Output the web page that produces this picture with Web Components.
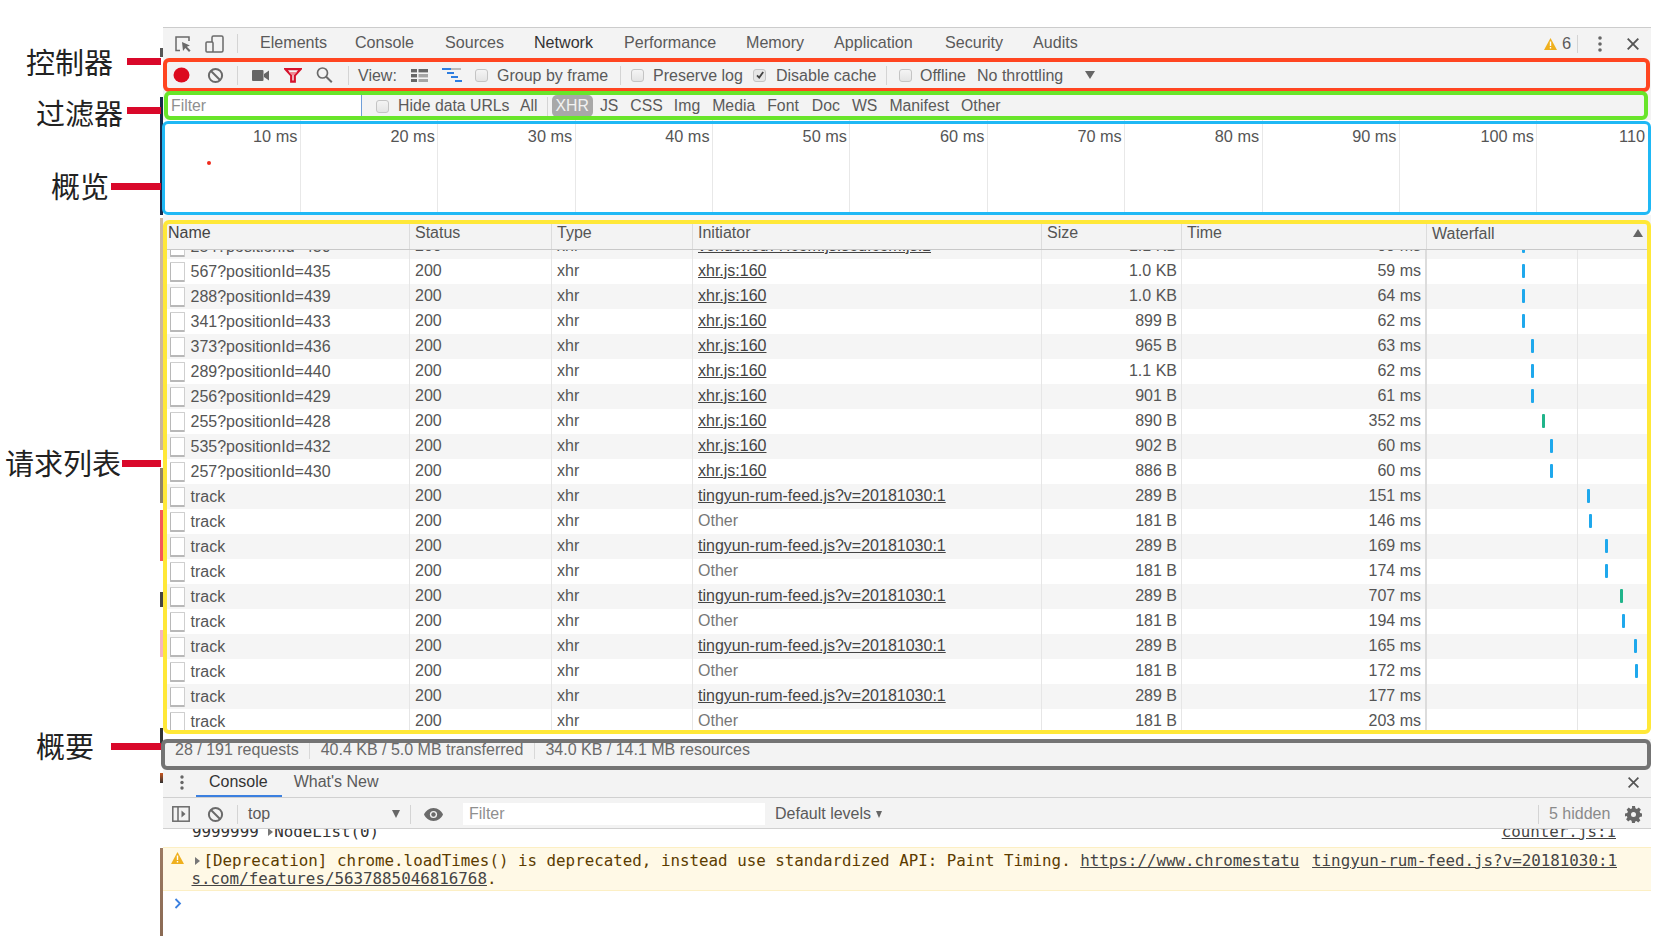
<!DOCTYPE html>
<html lang="en">
<head>
<meta charset="utf-8">
<title>Network panel</title>
<style>
  html, body { margin: 0; height: 100%; background: #fff; }
  body {
    font-family: "Liberation Sans", Arial, sans-serif;
    color: #5a5a5a;
    overflow: hidden;
  }
</style>
</head>
<body>
<dt-page>
  <main-tabs></main-tabs>
  <call-out label="控制器" color="#ff4520" bar="#d9082a" thick="4" style="--top:-1px;--bottom:-1px;--left:2px;--right:1px;--lx:-135px;--ly:-15px;--bw:34px;--by:-1px">
    <net-toolbar></net-toolbar>
  </call-out>
  <call-out label="过滤器" color="#68e52a" bar="#d9082a" thick="4" style="--top:0px;--bottom:0px;--left:3px;--right:3px;--lx:-125px;--ly:4px;--bw:34px;--by:16px">
    <filter-bar></filter-bar>
  </call-out>
  <call-out label="概览" color="#1fb8f5" bar="#d9082a" thick="3" style="--top:1px;--bottom:0px;--left:1px;--right:0px;--lx:-110px;--ly:48px;--bw:50px;--by:63px">
    <over-view></over-view>
  </call-out>
  <div style="height:7px;background:#f5f5f5"></div>
  <call-out label="请求列表" color="#ffe838" bar="#d9082a" thick="4" style="--top:-2px;--bottom:0px;--left:2px;--right:0px;--lx:-156px;--ly:223px;--bw:39px;--by:238px">
    <request-table></request-table>
  </call-out>
  <div style="height:5px"></div>
  <call-out label="概要" color="#747474" bar="#d9082a" thick="4" style="--top:0px;--bottom:0px;--left:0px;--right:0px;--lx:-125px;--ly:-11px;--bw:50px;--by:4px">
    <status-bar></status-bar>
  </call-out>
  <console-drawer></console-drawer>
</dt-page>

<script>
// small helper, every component sets its shadow root the same way
class Base extends HTMLElement {
  connectedCallback() {
    if (this.shadowRoot) return;
    this.attachShadow({ mode: 'open' }).innerHTML = this.render();
  }
}

const ICONS = {
  block: `<svg width="17" height="17" viewBox="0 0 17 17" fill="none" stroke="#6a6a6a" stroke-width="2"><circle cx="8.5" cy="8.5" r="6.6"/><path d="M4 4l9 9"/></svg>`,
  warn: `<svg width="13" height="12" viewBox="0 0 13 12"><path d="M6.5 0L13 12H0z" fill="#efb01e"/><path d="M5.8 3.5h1.4v4.5H5.8zM5.8 9h1.4v1.5H5.8z" fill="#fff"/></svg>`,
  check: (on) => `<span class="cb ${on ? 'on' : ''}">${on ? '<svg width="12" height="12" viewBox="0 0 12 12" fill="none" stroke="#444" stroke-width="1.8"><path d="M3 6.4l2.2 2.2L9.2 3"/></svg>' : ''}</span>`
};

const CB_CSS = `
  .cb { width: 11px; height: 11px; flex: none; border: 1px solid #c4c4c4; border-radius: 3px; background: linear-gradient(#f4f4f4,#e4e4e4); display: inline-flex; align-items: center; justify-content: center; }
  .cb svg { flex: none; margin: -1px; }
  .cb.on { background: #e6e6e6; }
  .sep { width: 1px; height: 19px; background: #d4d4d4; flex: none; }
`;

class DtPage extends Base {
  render() {
    return `<style>
      :host { display: block; position: relative; height: 936px; box-sizing: border-box; margin-left: 161px; width: 1490px; padding-top: 27px; font-size: 16px; }
      /* the site behind the docked panel shows through as a thin strip */
      .edge { position: absolute; left: -1px; top: 0; width: 3px; height: 100%; z-index: 1;
        background: linear-gradient(#fff 48px,#555 48px,#555 57px,#fff 57px,#fff 97px,#16294a 97px,#16294a 215px,#fff 215px,#fff 218px,#cdb9a2 218px,#c8b49e 450px,#fff 450px,#fff 468px,#8e826a 468px,#8e826a 503px,#fff 503px,#fff 510px,#f5585a 510px,#f5585a 561px,#fff 561px,#fff 592px,#444 592px,#444 607px,#fff 607px,#fff 630px,#f4b6c2 630px,#f4b6c2 657px,#fff 657px,#fff 728px,#333 728px,#333 747px,#fff 747px,#fff 773px,#c8561e 773px,#333 783px,#fff 783px,#fff 848px,#9c7a62 848px,#8a6a54 936px); }
    </style><div class="edge"></div><slot></slot>`;
  }
}

class MainTabs extends Base {
  render() {
    const tabs = [['Elements', 99, 0], ['Console', 194, 0], ['Sources', 284, 0], ['Network', 373, 1], ['Performance', 463, 0], ['Memory', 585, 0], ['Application', 673, 0], ['Security', 784, 0], ['Audits', 872, 0]];
    return `<style>
      :host { display: block; height: 32px; background: #f3f3f3; border-top: 1px solid #ccc; box-sizing: border-box; }
      .bar { display: flex; align-items: center; height: 31px; padding-left: 13px; }
      span.t { white-space: nowrap; color: #5a5a5a; }
      span.t.on { color: #333; }
      .sep { width: 1px; height: 19px; background: #d4d4d4; flex: none; }
      .end { margin-left: auto; display: flex; align-items: center; }
      .tabs { display: flex; margin-left: 22px; font-size: 16.1px; margin-top: -2px; }
    </style><div class="bar">
      <svg width="19" height="18" viewBox="0 0 19 18" fill="none" stroke="#6a6a6a" stroke-width="1.5" style="flex:none"><path d="M6 15.5H2V2h13v4"/><path d="M8 7l1 9 2.3-3 3.7 4 1.6-1.600-3.700-3.600 3-1.400z" fill="#6a6a6a" stroke="none"/></svg>
      <svg width="19" height="18" viewBox="0 0 19 18" fill="none" stroke="#6a6a6a" stroke-width="1.5" style="flex:none;margin-left:12px"><rect x="7" y="1" width="11" height="16" rx="1.5"/><rect x="1" y="7" width="7" height="10" rx="1" fill="#f3f3f3"/></svg>
      <span class="sep" style="margin-left:13px"></span>
      <span class="tabs">
      ${tabs.map(([t, x, on], i) => `<span class="t ${on ? 'on' : ''}" style="width:${i < tabs.length - 1 ? tabs[i + 1][1] - x : 60}px">${t}</span>`).join('')}
      </span>
      <span class="end">
        ${ICONS.warn}
        <span style="margin-left:5px;font-size:16.5px;width:9px">6</span>
        <span class="sep" style="margin-left:6px;height:18px"></span>
        <svg width="4" height="16" viewBox="0 0 4 16" fill="#666" style="margin-left:20px"><circle cx="2" cy="2" r="1.8"/><circle cx="2" cy="8" r="1.8"/><circle cx="2" cy="14" r="1.8"/></svg>
        <svg width="12" height="12" viewBox="0 0 12 12" stroke="#555" stroke-width="1.9" style="margin-left:25px;margin-right:12px"><path d="M.7.7l10.6 10.6M11.3.7L.7 11.3"/></svg>
      </span>
    </div>`;
  }
}

class CallOut extends Base {
  render() {
    const label = this.getAttribute('label'), color = this.getAttribute('color');
    const bar = this.getAttribute('bar'), thick = this.getAttribute('thick');
    return `<style>
      :host { display: block; position: relative; }
      .box { position: absolute; z-index: 5; pointer-events: none; box-sizing: border-box;
        top: var(--top); bottom: var(--bottom); left: var(--left); right: var(--right);
        border: ${thick}px solid ${color}; border-radius: 6px; }
      .lbl { position: absolute; left: var(--lx); top: var(--ly); white-space: nowrap; z-index: 6;
        font: 29px/1.2 "Noto Sans CJK SC", sans-serif; color: #222; }
      .bar { position: absolute; z-index: 6; left: calc(0px - var(--bw)); width: var(--bw); top: var(--by); height: 7px; background: ${bar}; }
    </style><slot></slot><div class="box"></div><div class="lbl">${label}</div><div class="bar"></div>`;
  }
}

class NetToolbar extends Base {
  render() {
    return `<style>${CB_CSS}
      :host { display: block; height: 32px; background: #f3f3f3; font-size: 16px; }
      .r { display: flex; align-items: center; height: 32px; white-space: nowrap; }
      .r > * { flex: none; }
      .tx { margin-top: 2px; }
    </style><div class="r">
      <svg style="margin-left:12px" width="17" height="16" viewBox="0 0 17 16"><ellipse cx="8.5" cy="8" rx="8" ry="7.6" fill="#dc0b1e"/></svg>
      <span style="margin-left:17px;display:flex">${ICONS.block}</span>
      <span class="sep" style="margin-left:13px"></span>
      <svg style="margin-left:14px" width="17" height="11" viewBox="0 0 17 11" fill="#666"><rect width="11.5" height="11" rx="1"/><path d="M12 4l5-3.500v10L12 7z"/></svg>
      <svg style="margin-left:15px" width="18" height="15" viewBox="0 0 18 15" fill="none" stroke="#d6122c" stroke-width="2.2"><path d="M1.500 1.200h15L10.800 7.400v6.200H7.200V7.400z"/><path d="M5 4h8l-2.800 3H7.800z" fill="#f08a94" stroke="none"/></svg>
      <svg style="margin-left:14px" width="17" height="16" viewBox="0 0 17 16" fill="none" stroke="#6a6a6a" stroke-width="1.7"><circle cx="6.500" cy="6" r="5"/><path d="M10.200 9.800l5.600 5.400" stroke-width="2"/></svg>
      <span class="sep" style="margin-left:15px"></span>
      <span class="tx" style="margin-left:9px;width:53px">View:</span>
      <svg width="17" height="13" viewBox="0 0 17 13" fill="#666"><rect width="6" height="3.400"/><rect x="7.500" width="9.500" height="3.400"/><rect y="5" width="6" height="3.400"/><rect x="7.500" y="5" width="9.500" height="3.400" opacity=".55"/><rect y="10" width="6" height="3"/><rect x="7.500" y="10" width="9.500" height="3" opacity=".55"/></svg>
      <svg style="margin-left:14px" width="20" height="14" viewBox="0 0 20 14"><path d="M0 1h9" stroke="#2d7de0" stroke-width="2"/><path d="M9 1h10" stroke="#bbb" stroke-width="2"/><path d="M5 5h7M9 9h7M13 13h7" stroke="#2d7de0" stroke-width="2"/></svg>
      <span style="margin-left:13px;display:flex">${ICONS.check(0)}</span>
      <span class="tx" style="margin-left:9px;width:113px">Group by frame</span>
      <span class="sep" style="margin-left:10px"></span>
      <span style="margin-left:10px;display:flex">${ICONS.check(0)}</span>
      <span class="tx" style="margin-left:9px;width:92px">Preserve log</span>
      <span style="margin-left:8px;display:flex">${ICONS.check(1)}</span>
      <span class="tx" style="margin-left:10px;width:101px">Disable cache</span>
      <span class="sep" style="margin-left:9px"></span>
      <span style="margin-left:12px;display:flex">${ICONS.check(0)}</span>
      <span class="tx" style="margin-left:8px;width:50px">Offline</span>
      <span class="tx" style="margin-left:7px;width:100px">No throttling</span>
      <span style="margin-left:8px;width:0;height:0;border:5px solid transparent;border-top:8px solid #666;border-bottom:0"></span>
    </div>`;
  }
}

class FilterBar extends Base {
  render() {
    return `<style>${CB_CSS}
      :host { display: block; height: 29px; background: #f3f3f3; font-size: 15.8px; }
      .r { display: flex; align-items: center; height: 28px; padding-top: 1px; white-space: nowrap; padding-left: 7px; }
      .r > * { flex: none; }
      .in { width: 194px; height: 22px; box-sizing: border-box; background: #fff; border-right: 1px solid #6f9fd8; border-bottom: 1px solid #6f9fd8; color: #8f8f8f; padding-left: 3px; line-height: 21px; }
      .types { display: flex; align-items: center; }
      .x { background: #a8a8a8; color: #f2f2f2; border-radius: 5px; padding: 0 4px; height: 22px; line-height: 22px; }
    </style><div class="r">
      <div class="in">Filter</div>
      <span style="margin-left:14px;display:flex">${ICONS.check(0)}</span>
      <span style="margin-left:9px;width:122px">Hide data URLs</span>
      <span>All</span>
      <span class="sep" style="margin-left:9px;margin-right:4px"></span>
      <span class="types">
        <span class="x" style="margin-right:7px">XHR</span>
        <span style="margin-right:12px">JS</span>
        <span style="margin-right:11px">CSS</span>
        <span style="margin-right:12px">Img</span>
        <span style="margin-right:12px">Media</span>
        <span style="margin-right:13px">Font</span>
        <span style="margin-right:12px">Doc</span>
        <span style="margin-right:12px">WS</span>
        <span style="margin-right:12px">Manifest</span>
        <span>Other</span>
      </span>
    </div>`;
  }
}

class OverView extends Base {
  render() {
    const cells = Array.from({ length: 11 }, (_, i) => `<div class="c"><span>${(i + 1) * 10} ms</span></div>`).join('');
    return `<style>
      :host { display: block; height: 95px; background: #fff; position: relative; overflow: hidden; font-size: 16.3px; }
      .g { display: flex; height: 100%; margin-left: 2.5px; }
      .c { flex: none; width: 137.4px; box-sizing: border-box; border-right: 1px solid #e8e8e8; text-align: right; padding: 7px 2.5px 0 0; white-space: nowrap; line-height: 18px; color: #555; }
      .c span { display: block; }
      .dot { position: absolute; left: 46px; top: 41px; width: 4px; height: 4px; border-radius: 50%; background: #f02a1c; }
    </style><div class="g">${cells}</div><div class="dot"></div>`;
  }
}

class RequestRow extends Base {
  render() {
    const a = (k) => this.getAttribute(k) || '';
    const initiator = a('init');
    const link = initiator !== 'Other';
    const color = a('barcolor') || '#1fa8ec';
    return `<style>
      :host { display: grid; grid-template-columns: var(--cols); height: 25px; line-height: 24px; white-space: nowrap; font-size: 16px; color: #555; }
      :host([odd]) { background: #f5f5f5; }
      .c { box-sizing: border-box; border-right: 1px solid #e6e6e6; overflow: hidden; padding-left: 5px; }
      .n { display: flex; align-items: center; padding-left: 9px; }
      .ck { width: 13px; height: 17px; box-sizing: content-box; border: 1px solid #cfcfcf; border-left-color: #b8b8b8; border-bottom: 2px solid #b8b8b8; border-radius: 1px; background: #fff; flex: none; margin-right: 5.5px; }
      a { color: #444; text-decoration: underline; }
      .o { color: #777; }
      .rt { text-align: right; padding: 0 4px 0 0; }
      .w { position: relative; border-right: 0; padding: 0; overflow: visible; }
      .w::before { content: ""; position: absolute; left: 150px; top: 0; bottom: 0; width: 1px; background: #e6e6e6; }
      .b { position: absolute; top: 5px; height: 14px; width: 3px; border-radius: 1px; background: ${color}; }
    </style>
    <div class="c n"><span class="ck"></span>${a('name')}</div>
    <div class="c">200</div>
    <div class="c">xhr</div>
    <div class="c">${link ? `<a>${initiator}</a>` : `<span class="o">Other</span>`}</div>
    <div class="c rt">${a('size')}</div>
    <div class="c rt" style="border-right:2px solid #dcdcdc">${a('time')}</div>
    <div class="c w"><span class="b" style="left:${a('bar') - 1}px"></span></div>`;
  }
}

class RequestTable extends Base {
  render() {
    const feed = 'tingyun-rum-feed.js?v=20181030:1';
    const data = [
      ['567?positionId=435', 'xhr.js:160', '1.0 KB', '59 ms', 96],
      ['288?positionId=439', 'xhr.js:160', '1.0 KB', '64 ms', 96],
      ['341?positionId=433', 'xhr.js:160', '899 B', '62 ms', 96],
      ['373?positionId=436', 'xhr.js:160', '965 B', '63 ms', 104.5],
      ['289?positionId=440', 'xhr.js:160', '1.1 KB', '62 ms', 104.5],
      ['256?positionId=429', 'xhr.js:160', '901 B', '61 ms', 104.5],
      ['255?positionId=428', 'xhr.js:160', '890 B', '352 ms', 115.5, '#20b48a'],
      ['535?positionId=432', 'xhr.js:160', '902 B', '60 ms', 123.5],
      ['257?positionId=430', 'xhr.js:160', '886 B', '60 ms', 123.5],
      ['track', feed, '289 B', '151 ms', 161],
      ['track', 'Other', '181 B', '146 ms', 162.5],
      ['track', feed, '289 B', '169 ms', 179],
      ['track', 'Other', '181 B', '174 ms', 179],
      ['track', feed, '289 B', '707 ms', 194, '#20b48a'],
      ['track', 'Other', '181 B', '194 ms', 195.5],
      ['track', feed, '289 B', '165 ms', 207.5],
      ['track', 'Other', '181 B', '172 ms', 209],
      ['track', feed, '289 B', '177 ms', 222, '#c4e4c8'],
      ['track', 'Other', '181 B', '203 ms', 222, '#c4e4c8'],
    ];
    const heads = ['Name', 'Status', 'Type', 'Initiator', 'Size', 'Time', 'Waterfall'];
    return `<style>
      :host { display: block; --cols: 249px 142px 141px 349px 140px 245px 224px; }
      .h { display: grid; grid-template-columns: var(--cols); height: 28px; line-height: 22px; background: #f3f3f3; border-bottom: 1px solid #c8c8c8; box-sizing: border-box; font-size: 16px; color: #555; }
      .h div { border-right: 1px solid #dcdcdc; padding-left: 5px; position: relative; box-sizing: border-box; }
      .h div:first-child { padding-left: 7px; color: #444; }
      .h div:last-child { border: 0; line-height: 24px; }
      .h i { position: absolute; right: 8px; top: 7px; width: 0; height: 0; border: 5px solid transparent; border-top: 0; border-bottom: 8px solid #666; }
      .body { height: 484px; overflow: hidden; position: relative; }
      .shift { margin-top: -16px; }
    </style>
    <div class="h">${heads.map((t, i) => `<div>${t}${i === 6 ? '<i></i>' : ''}</div>`).join('')}</div>
    <div class="body"><div class="shift">
      <request-row odd name="254?positionId=430" init="vendor.ed77.com.js:sed.com.js:1" size="1.1 KB" time="99 ms" bar="96"></request-row>
      ${data.map((d, i) => `<request-row ${i % 2 ? 'odd' : ''} name="${d[0]}" init="${d[1]}" size="${d[2]}" time="${d[3]}" bar="${d[4]}" barcolor="${d[5] || ''}"></request-row>`).join('')}
    </div></div>`;
  }
}

class StatusBar extends Base {
  render() {
    return `<style>
      :host { display: block; height: 31px; background: #f3f3f3; font-size: 16px; color: #6a6a6a; }
      .r { display: flex; align-items: center; height: 21px; white-space: nowrap; padding-left: 14px; }
      .s { width: 1px; height: 19px; background: #d8d8d8; margin: 0 10.5px; }
    </style><div class="r">
      <span>28 / 191 requests</span><span class="s"></span>
      <span>40.4 KB / 5.0 MB transferred</span><span class="s"></span>
      <span>34.0 KB / 14.1 MB resources</span>
    </div>`;
  }
}

class ConsoleDrawer extends Base {
  render() {
    return `<style>
      :host { display: block; font-size: 16px; }
      .tabs { height: 28px; box-sizing: border-box; background: #f3f3f3; border-bottom: 1px solid #d0d0d0; display: flex; align-items: center; white-space: nowrap; }
      .tab { height: 27px; line-height: 24px; box-sizing: border-box; }
      .tab.on { color: #333; border-bottom: 2px solid #3b80e0; padding: 0 14px 0 13px; margin-left: 30px; }
      .toolbar { height: 31px; box-sizing: border-box; padding-top: 2px; background: #f3f3f3; border-bottom: 1px solid #d0d0d0; display: flex; align-items: center; white-space: nowrap; }
      .toolbar > * { flex: none; }
      .sep { width: 1px; height: 19px; background: #d4d4d4; }
      .in { width: 302px; height: 22px; line-height: 22px; background: #fff; color: #8f8f8f; padding-left: 6px; box-sizing: border-box; }
      .log { height: 107px; overflow: hidden; font: 15.83px/18px "DejaVu Sans Mono", monospace; }
      .l0 { height: 18px; overflow: hidden; display: flex; justify-content: space-between; padding: 0 35px 0 31px; color: #333; }
      .l0 > span { display: block; margin-top: -6px; }
      .l0 a { text-decoration: underline; color: #444; }
      .l0 i { display: inline-block; width: 0; height: 0; border: 4px solid transparent; border-left: 5px solid #777; border-right: 0; margin: 0 1px 1px 0; }
      .warn { position: relative; box-sizing: border-box; height: 44px; background: #fff9e6; border-top: 1px solid #fcefc4; border-bottom: 1px solid #fcefc4; color: #5c3c00; padding: 4px 34px 0 30.5px; }
      .warn p { margin: 0; }
      .warn a { color: #444; text-decoration: underline; }
      .warn .src { position: absolute; right: 34px; top: 4px; }
      .warn .a { position: absolute; left: 10px; top: 4px; display: flex; }
      .warn .tri { display: inline-block; width: 0; height: 0; border: 4px solid transparent; border-left: 5px solid #777; border-right: 0; margin: 0 4px 1px 3px; }
      .pr { padding: 4px 0 0 13px; }
    </style>
    <div class="tabs">
      <svg width="4" height="15" viewBox="0 0 4 15" fill="#666" style="margin:-3px 0 0 19px"><circle cx="2" cy="2" r="1.7"/><circle cx="2" cy="7.5" r="1.7"/><circle cx="2" cy="13" r="1.7"/></svg>
      <span class="tab on" style="margin-left:12px">Console</span>
      <span class="tab" style="margin-left:12px;color:#5a5a5a">What's New</span>
      <svg width="11" height="11" viewBox="0 0 11 11" stroke="#555" stroke-width="1.7" style="margin:-3px 12px 0 auto"><path d="M.6.6l9.800 9.800M10.400.6L.6 10.400"/></svg>
    </div>
    <div class="toolbar">
      <svg style="margin-left:11px" width="18" height="16" viewBox="0 0 18 16" fill="none" stroke="#6a6a6a" stroke-width="1.5"><rect x=".8" y=".8" width="16.400" height="14.400"/><path d="M6 1v14"/><path d="M9.500 4.500l4 3.500-4 3.500z" fill="#6a6a6a" stroke="none"/></svg>
      <span style="margin-left:17px;display:flex">${ICONS.block}</span>
      <span class="sep" style="margin-left:13px"></span>
      <span style="margin-left:10px;width:144px">top</span>
      <span style="width:0;height:0;border:4.500px solid transparent;border-top:8px solid #666;border-bottom:0;margin-right:10px"></span>
      <span class="sep"></span>
      <svg style="margin-left:13px" width="19" height="13" viewBox="0 0 19 13"><path d="M9.500 0C5 0 1.500 3 0 6.500 1.500 10 5 13 9.500 13S17.500 10 19 6.500C17.500 3 14 0 9.500 0z" fill="#6a6a6a"/><circle cx="9.500" cy="6.500" r="3.600" fill="#f3f3f3"/><circle cx="9.500" cy="6.500" r="2.200" fill="#6a6a6a"/></svg>
      <span class="in" style="margin-left:20px">Filter</span>
      <span style="margin-left:10px;width:101px">Default levels</span>
      <span style="width:0;height:0;border:3.500px solid transparent;border-top:7px solid #666;border-bottom:0"></span>
      <span class="sep" style="margin-left:auto"></span>
      <span style="margin-left:10px;width:76px;color:#8a8a8a">5 hidden</span>
      <svg style="margin-right:9px" width="17" height="17" viewBox="0 0 17 17"><path fill="#666" fill-rule="evenodd" d="M7 0h3l.4 2.300 1.500.6 1.900-1.300 2.100 2.100-1.300 1.900.6 1.500L17 7.500v3l-2.300.4-.6 1.500 1.300 1.900-2.100 2.100-1.900-1.300-1.500.6L10 17H7l-.4-2.300-1.500-.6-1.900 1.300-2.100-2.100 1.300-1.900-.6-1.500L0 10.500v-3l2.300-.4.6-1.500L1.600 3.700l2.100-2.100 1.900 1.300 1.500-.6zM8.500 6a2.500 2.500 0 1 0 0 5 2.500 2.500 0 0 0 0-5z"/></svg>
    </div>
    <div class="log">
      <div class="l0"><span>9999999 <i></i>NodeList(0)</span><span><a>counter.js:1</a></span></div>
      <div class="warn">
        <span class="a">${ICONS.warn}</span>
        <p><span class="tri"></span>[Deprecation] chrome.loadTimes() is deprecated, instead use standardized API: Paint Timing. <a>https://www.chromestatu</a><br><a>s.com/features/5637885046816768</a>.</p>
        <a class="src">tingyun-rum-feed.js?v=20181030:1</a>
      </div>
      <div class="pr"><svg width="8" height="11" viewBox="0 0 8 11" fill="none" stroke="#3b80e0" stroke-width="1.800"><path d="M1.500 1l4.500 4.500L1.500 10"/></svg></div>
    </div>`;
  }
}

customElements.define('dt-page', DtPage);
customElements.define('main-tabs', MainTabs);
customElements.define('call-out', CallOut);
customElements.define('net-toolbar', NetToolbar);
customElements.define('filter-bar', FilterBar);
customElements.define('over-view', OverView);
customElements.define('request-row', RequestRow);
customElements.define('request-table', RequestTable);
customElements.define('status-bar', StatusBar);
customElements.define('console-drawer', ConsoleDrawer);
</script>
</body>
</html>
